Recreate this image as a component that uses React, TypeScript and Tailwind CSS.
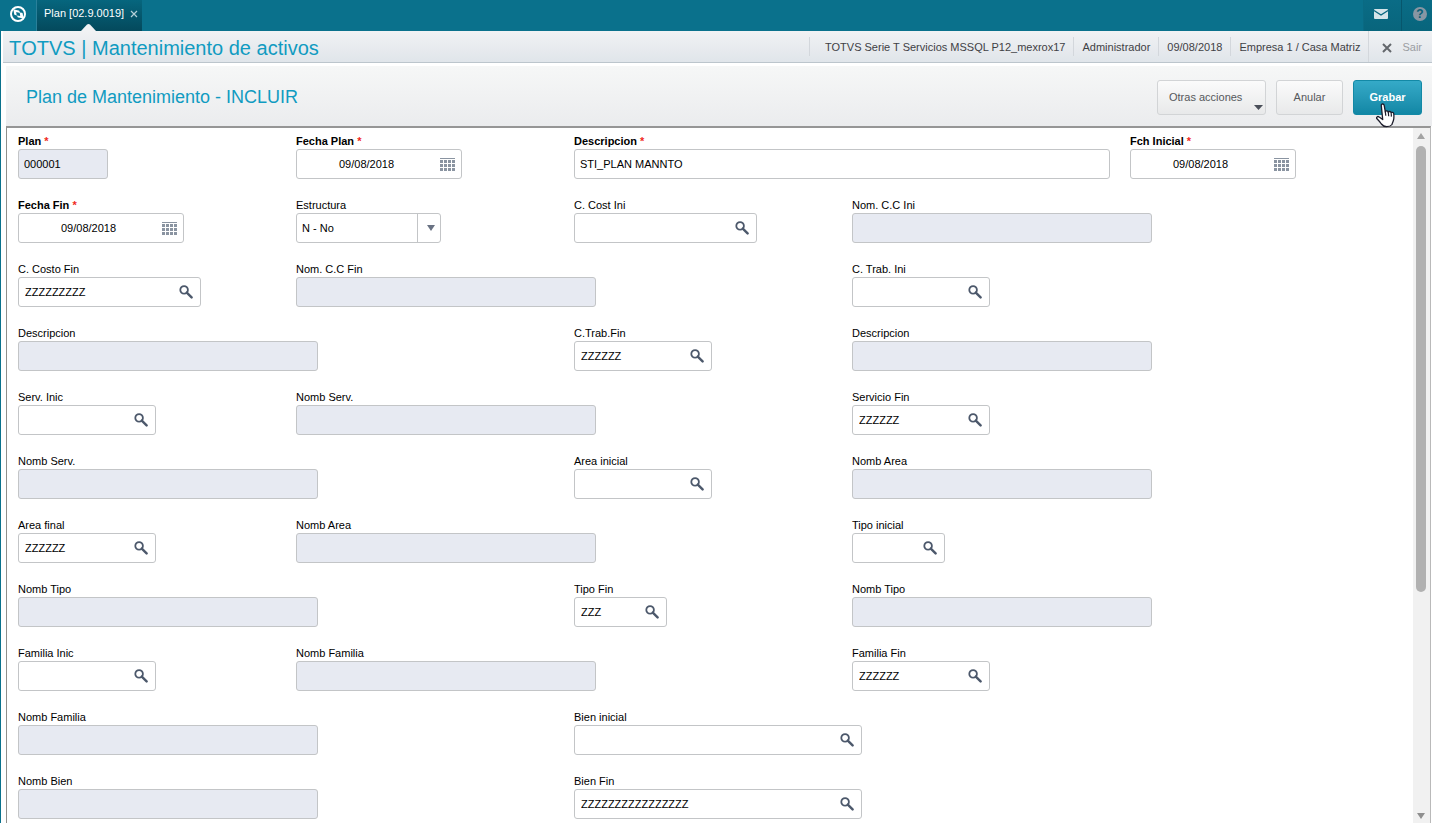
import React, { useId } from "react";

type Kind = "readonly" | "text" | "date" | "search" | "select";

interface FieldDef {
  label: string;
  kind: Kind;
  width: string;
  place: string;
  value?: string;
  required?: boolean;
}

const C1 = "col-start-1";
const C2 = "col-start-2";
const C3 = "col-start-3";
const C4 = "col-start-4";
const C5 = "col-start-5";
const WIDE = "w-[300px]";
const DATE = "w-[166px]";
const CODE6 = "w-[138px]";
const CODE9 = "w-[183px]";
const CODE3 = "w-[93px]";
const CODE16 = "w-72";

const fields: FieldDef[] = [
  { label: "Plan", kind: "readonly", width: "w-[90px]", place: C1, value: "000001", required: true },
  { label: "Fecha Plan", kind: "date", width: DATE, place: C2, value: "09/08/2018", required: true },
  { label: "Descripcion", kind: "text", width: "w-[536px]", place: "col-start-3 col-span-2", value: "STI_PLAN MANNTO", required: true },
  { label: "Fch Inicial", kind: "date", width: DATE, place: C5, value: "09/08/2018", required: true },
  { label: "Fecha Fin", kind: "date", width: DATE, place: C1, value: "09/08/2018", required: true },
  { label: "Estructura", kind: "select", width: "w-[145px]", place: C2, value: "N - No" },
  { label: "C. Cost Ini", kind: "search", width: CODE9, place: C3 },
  { label: "Nom. C.C Ini", kind: "readonly", width: WIDE, place: C4 },
  { label: "C. Costo Fin", kind: "search", width: CODE9, place: C1, value: "ZZZZZZZZZ" },
  { label: "Nom. C.C Fin", kind: "readonly", width: WIDE, place: C2 },
  { label: "C. Trab. Ini", kind: "search", width: CODE6, place: C4 },
  { label: "Descripcion", kind: "readonly", width: WIDE, place: C1 },
  { label: "C.Trab.Fin", kind: "search", width: CODE6, place: C3, value: "ZZZZZZ" },
  { label: "Descripcion", kind: "readonly", width: WIDE, place: C4 },
  { label: "Serv. Inic", kind: "search", width: CODE6, place: C1 },
  { label: "Nomb Serv.", kind: "readonly", width: WIDE, place: C2 },
  { label: "Servicio Fin", kind: "search", width: CODE6, place: C4, value: "ZZZZZZ" },
  { label: "Nomb Serv.", kind: "readonly", width: WIDE, place: C1 },
  { label: "Area inicial", kind: "search", width: CODE6, place: C3 },
  { label: "Nomb Area", kind: "readonly", width: WIDE, place: C4 },
  { label: "Area final", kind: "search", width: CODE6, place: C1, value: "ZZZZZZ" },
  { label: "Nomb Area", kind: "readonly", width: WIDE, place: C2 },
  { label: "Tipo inicial", kind: "search", width: CODE3, place: C4 },
  { label: "Nomb Tipo", kind: "readonly", width: WIDE, place: C1 },
  { label: "Tipo Fin", kind: "search", width: CODE3, place: C3, value: "ZZZ" },
  { label: "Nomb Tipo", kind: "readonly", width: WIDE, place: C4 },
  { label: "Familia Inic", kind: "search", width: CODE6, place: C1 },
  { label: "Nomb Familia", kind: "readonly", width: WIDE, place: C2 },
  { label: "Familia Fin", kind: "search", width: CODE6, place: C4, value: "ZZZZZZ" },
  { label: "Nomb Familia", kind: "readonly", width: WIDE, place: C1 },
  { label: "Bien inicial", kind: "search", width: CODE16, place: C3 },
  { label: "Nomb Bien", kind: "readonly", width: WIDE, place: C1 },
  { label: "Bien Fin", kind: "search", width: CODE16, place: C3, value: "ZZZZZZZZZZZZZZZZ" },
];

function SearchIcon() {
  return (
    <svg width="14" height="14" viewBox="0 0 14 14" fill="none" stroke="#4c586b">
      <circle cx="5.1" cy="4.9" r="3.8" strokeWidth="1.8" />
      <path d="M7.8 7.6 12.600 12.400" strokeWidth="2.400" strokeLinecap="round" />
    </svg>
  );
}

function CalendarIcon() {
  return (
    <svg width="15" height="14" viewBox="0 0 15 14" fill="#8a94a1" shapeRendering="crispEdges">
      <rect width="15" height="1" />
      {[2, 6, 10].map((y) =>
        [0, 4, 8, 12].map((x) => <rect key={`${x}-${y}`} x={x} y={y} width="3" height="3" />)
      )}
    </svg>
  );
}

function Field({ label, kind, width, place, value = "", required }: FieldDef) {
  const id = useId();
  const inner = "h-full min-w-0 flex-1 bg-transparent outline-none";
  let control: React.ReactNode;
  if (kind === "date") {
    control = (
      <>
        <input id={id} type="text" defaultValue={value} className={`${inner} pl-[3px] text-center`} />
        <button type="button" aria-label={`${label}: calendario`} className="flex h-full w-7 items-center justify-center pt-0.5">
          <CalendarIcon />
        </button>
      </>
    );
  } else if (kind === "search") {
    control = (
      <>
        <input id={id} type="text" defaultValue={value} className={`${inner} pl-1.5`} />
        <button type="button" aria-label={`${label}: buscar`} className="flex h-full w-7 items-center justify-center">
          <SearchIcon />
        </button>
      </>
    );
  } else if (kind === "select") {
    control = (
      <>
        <select id={id} defaultValue={value} className={`${inner} appearance-none border-r border-[#c3c5c7] pl-[5px]`}>
          <option>{value}</option>
        </select>
        <svg width="22" height="8" viewBox="0 0 22 8" className="pointer-events-none" fill="#697283">
          <path d="M9 1h8l-4 6z" />
        </svg>
      </>
    );
  } else {
    control = <input id={id} type="text" defaultValue={value} readOnly={kind === "readonly"} className={`${inner} px-[5px]`} />;
  }
  return (
    <div className={`${place} min-w-0`}>
      <label htmlFor={id} className={`block h-4 whitespace-nowrap leading-4 ${required ? "font-bold" : ""}`}>
        {label}
        {required && <span className="text-[#f02a1d]"> *</span>}
      </label>
      <div className={`flex h-[30px] items-center rounded-[3px] border border-[#c3c5c7] ${width} ${kind === "readonly" ? "bg-[#e7eaf2]" : "bg-white"}`}>
        {control}
      </div>
    </div>
  );
}

function HandCursor() {
  return (
    <svg width="19" height="25" viewBox="0 0 19 25" className="pointer-events-none absolute top-[22px] left-[22px]">
      <path
        d="M5.300 2.600C5.100.6 7.800.4 8.200 2.300L9.300 8.800c.2-1.300 2.700-1.200 3 .5.300-1.300 2.600-1 2.900.6.400-1 2.500-.7 2.600 1.100.2 2.400.2 4.400-.3 6.200-.5 2-1.300 2.900-1.500 4.300-1.200 1.700-3.200 2.200-5.300 2.200-2.500 0-4-.9-5.300-2.700-1.100-1.700-2.700-3.400-4.400-5.200-1.200-1.500.6-3 2.200-1.800l3.500 2.500z"
        fill="#fff"
        stroke="#1c1c2b"
        strokeWidth="1.300"
        strokeLinejoin="round"
      />
      <path d="M9.300 8.500l.5 4.300M12.300 9.300l.4 3.900M15.200 10.300l.2 3.300" stroke="#1c1c2b" strokeWidth="1.200" />
    </svg>
  );
}

export default function App() {
  const info = ["Administrador", "09/08/2018", "Empresa 1 / Casa Matriz"];
  return (
    <div className="flex h-screen flex-col overflow-hidden bg-white text-[11px] text-black [font-family:'Liberation_Sans',Arial,sans-serif]">
      <header className="flex h-[31px] shrink-0 items-stretch bg-[#0a718c]">
        <a href="#" aria-label="Inicio" className="flex w-9 items-center justify-center pb-1">
          <svg width="18" height="18" viewBox="0 0 18 18">
            <circle cx="9" cy="9" r="7" fill="none" stroke="#fff" strokeWidth="2" />
            <path d="M4.500 5.200q0-.7.8-.6l4.300.8q.7.1.9.800l.3 1.200 2 .4q.7.1.9.8l.6 4q0 .8-.8.700l-4.200-.8q-.7-.1-.9-.8l-.3-1.200-2-.4q-.7-.1-.9-.8z" fill="#fff" />
            <path d="M7.200 7.100l3 .6q.5.1.6.6l.4 2.700-3-.6q-.5-.1-.6-.6z" fill="#0a718c" />
          </svg>
        </a>
        <div className="relative flex w-[106px] items-center gap-1.5 border-l border-[#2a809a] bg-linear-to-b from-[#06667e] to-[#04495c] pb-1 pl-[7px] text-white">
          <span className="whitespace-nowrap">Plan [02.9.0019]</span>
          <button type="button" aria-label="Cerrar Plan">
            <svg width="8" height="8" viewBox="0 0 8 8" stroke="#b5d0d8" strokeWidth="1.200">
              <path d="M1 1l6 6M7 1 1 7" />
            </svg>
          </button>
          <svg width="15" height="7" viewBox="0 0 15 7" className="absolute bottom-0 left-11" fill="#f1f2f4">
            <path d="M0 7 6 .6q1.500-1.200 3 0L15 7z" />
          </svg>
        </div>
        <div className="flex-1" />
        <button type="button" aria-label="Mensajes" className="flex w-[38px] items-center justify-center border-l border-[#0a6a83] bg-linear-to-b from-[#0a6c86] to-[#08657c] pr-1 pb-1">
          <svg width="14" height="10" viewBox="0 0 14 10">
            <rect width="14" height="10" rx="1" fill="#d5e4e9" />
            <path d="M0 1.500 7 6l7-4.500" fill="none" stroke="#0a6780" strokeWidth="1.400" />
          </svg>
        </button>
        <button type="button" aria-label="Ayuda" className="flex w-[31px] items-center justify-center border-l border-[#07566c] bg-linear-to-b from-[#0a6c86] to-[#08657c] pb-1 pl-1.5">
          <span className="flex size-3.5 items-center justify-center rounded-full bg-[#8796a3] text-xs font-bold text-[#0a5f76]">?</span>
        </button>
      </header>

      <div className="flex min-h-0 flex-1 flex-col border-l border-[#0a718c]">
        <div className="ml-0.5 flex h-8 shrink-0 items-center border-b border-[#bcc5cc] bg-linear-to-b from-[#f1f2f4] to-[#e0e5ea] pl-1.5 text-[#3f4145]">
          <h1 className="flex-1 whitespace-nowrap pt-0.5 text-xl text-[#109bc1] [font-kerning:none]">TOTVS | Mantenimiento de activos</h1>
          <span className="border-l border-[#d3d7dc] pt-0.5 pr-2 pl-[15px] whitespace-nowrap">TOTVS Serie T Servicios MSSQL P12_mexrox17</span>
          {info.map((text) => (
            <span key={text} className="border-l border-[#d3d7dc] px-2 pt-0.5 whitespace-nowrap">
              {text}
            </span>
          ))}
          <button type="button" className="flex h-full items-center gap-2.5 border-l border-[#d3d7dc] pt-0.5 pr-2.5 pl-[13px] text-[#9a9da2]">
            <svg width="10" height="10" viewBox="0 0 10 10" stroke="#63676c" strokeWidth="2">
              <path d="M1 1l8 8M9 1 1 9" />
            </svg>
            Sair
          </button>
        </div>

        <main className="mt-[3px] ml-[5px] flex min-h-0 flex-1 flex-col">
          <div className="flex h-[60px] shrink-0 items-center gap-2.5 bg-linear-to-b from-[#f6f7f7] to-[#ebecee] pt-0.5 pr-2.5 pl-5 text-[#56585c]">
            <h2 className="flex-1 whitespace-nowrap text-lg text-[#109bc1]">Plan de Mantenimiento - INCLUIR</h2>
            <button type="button" className="relative h-[35px] w-[109px] rounded-[3px] border border-[#d2d4d6] bg-linear-to-b from-[#fbfbfb] to-[#e8e9ea] pl-[11px] text-left">
              Otras acciones
              <svg width="9" height="5" viewBox="0 0 9 5" className="absolute right-[2px] bottom-1" fill="#4a4f59">
                <path d="M0 0h9L4.500 5z" />
              </svg>
            </button>
            <button type="button" className="h-[35px] w-[67px] rounded-[3px] border border-[#d2d4d6] bg-linear-to-b from-[#fbfbfb] to-[#e8e9ea]">
              Anular
            </button>
            <button type="button" className="relative z-10 h-[35px] w-[69px] rounded-[3px] border border-[#1389a6] bg-linear-to-b from-[#35aac8] to-[#1187a5] font-bold text-white">
              Grabar
              <HandCursor />
            </button>
          </div>

          <div className="mr-px flex min-h-0 flex-1 border-t-2 border-r border-l border-t-[#969696] border-r-[#b9b9b9] border-l-[#8f8f8c]">
            <form className="grid min-w-0 flex-1 grid-cols-5 content-start gap-y-[18px] overflow-y-auto pt-[5px] pr-[5px] pl-[11px] [scrollbar-width:none]">
              {fields.map((field, i) => (
                <Field key={i} {...field} />
              ))}
            </form>
            <div aria-hidden="true" className="flex w-[17px] shrink-0 flex-col items-center bg-[#f1f1f1] pt-[5px] pr-0.5 pb-1">
              <svg width="8" height="6" viewBox="0 0 8 6" fill="#a3a3a3">
                <path d="M0 6h8L4 0z" />
              </svg>
              <div className="mt-[7px] h-[65%] w-2.5 rounded-full bg-[#b1b1b1]" />
              <div className="flex-1" />
              <svg width="8" height="6" viewBox="0 0 8 6" fill="#8f8f8f">
                <path d="M0 0h8L4 6z" />
              </svg>
            </div>
          </div>
        </main>
      </div>
    </div>
  );
}
